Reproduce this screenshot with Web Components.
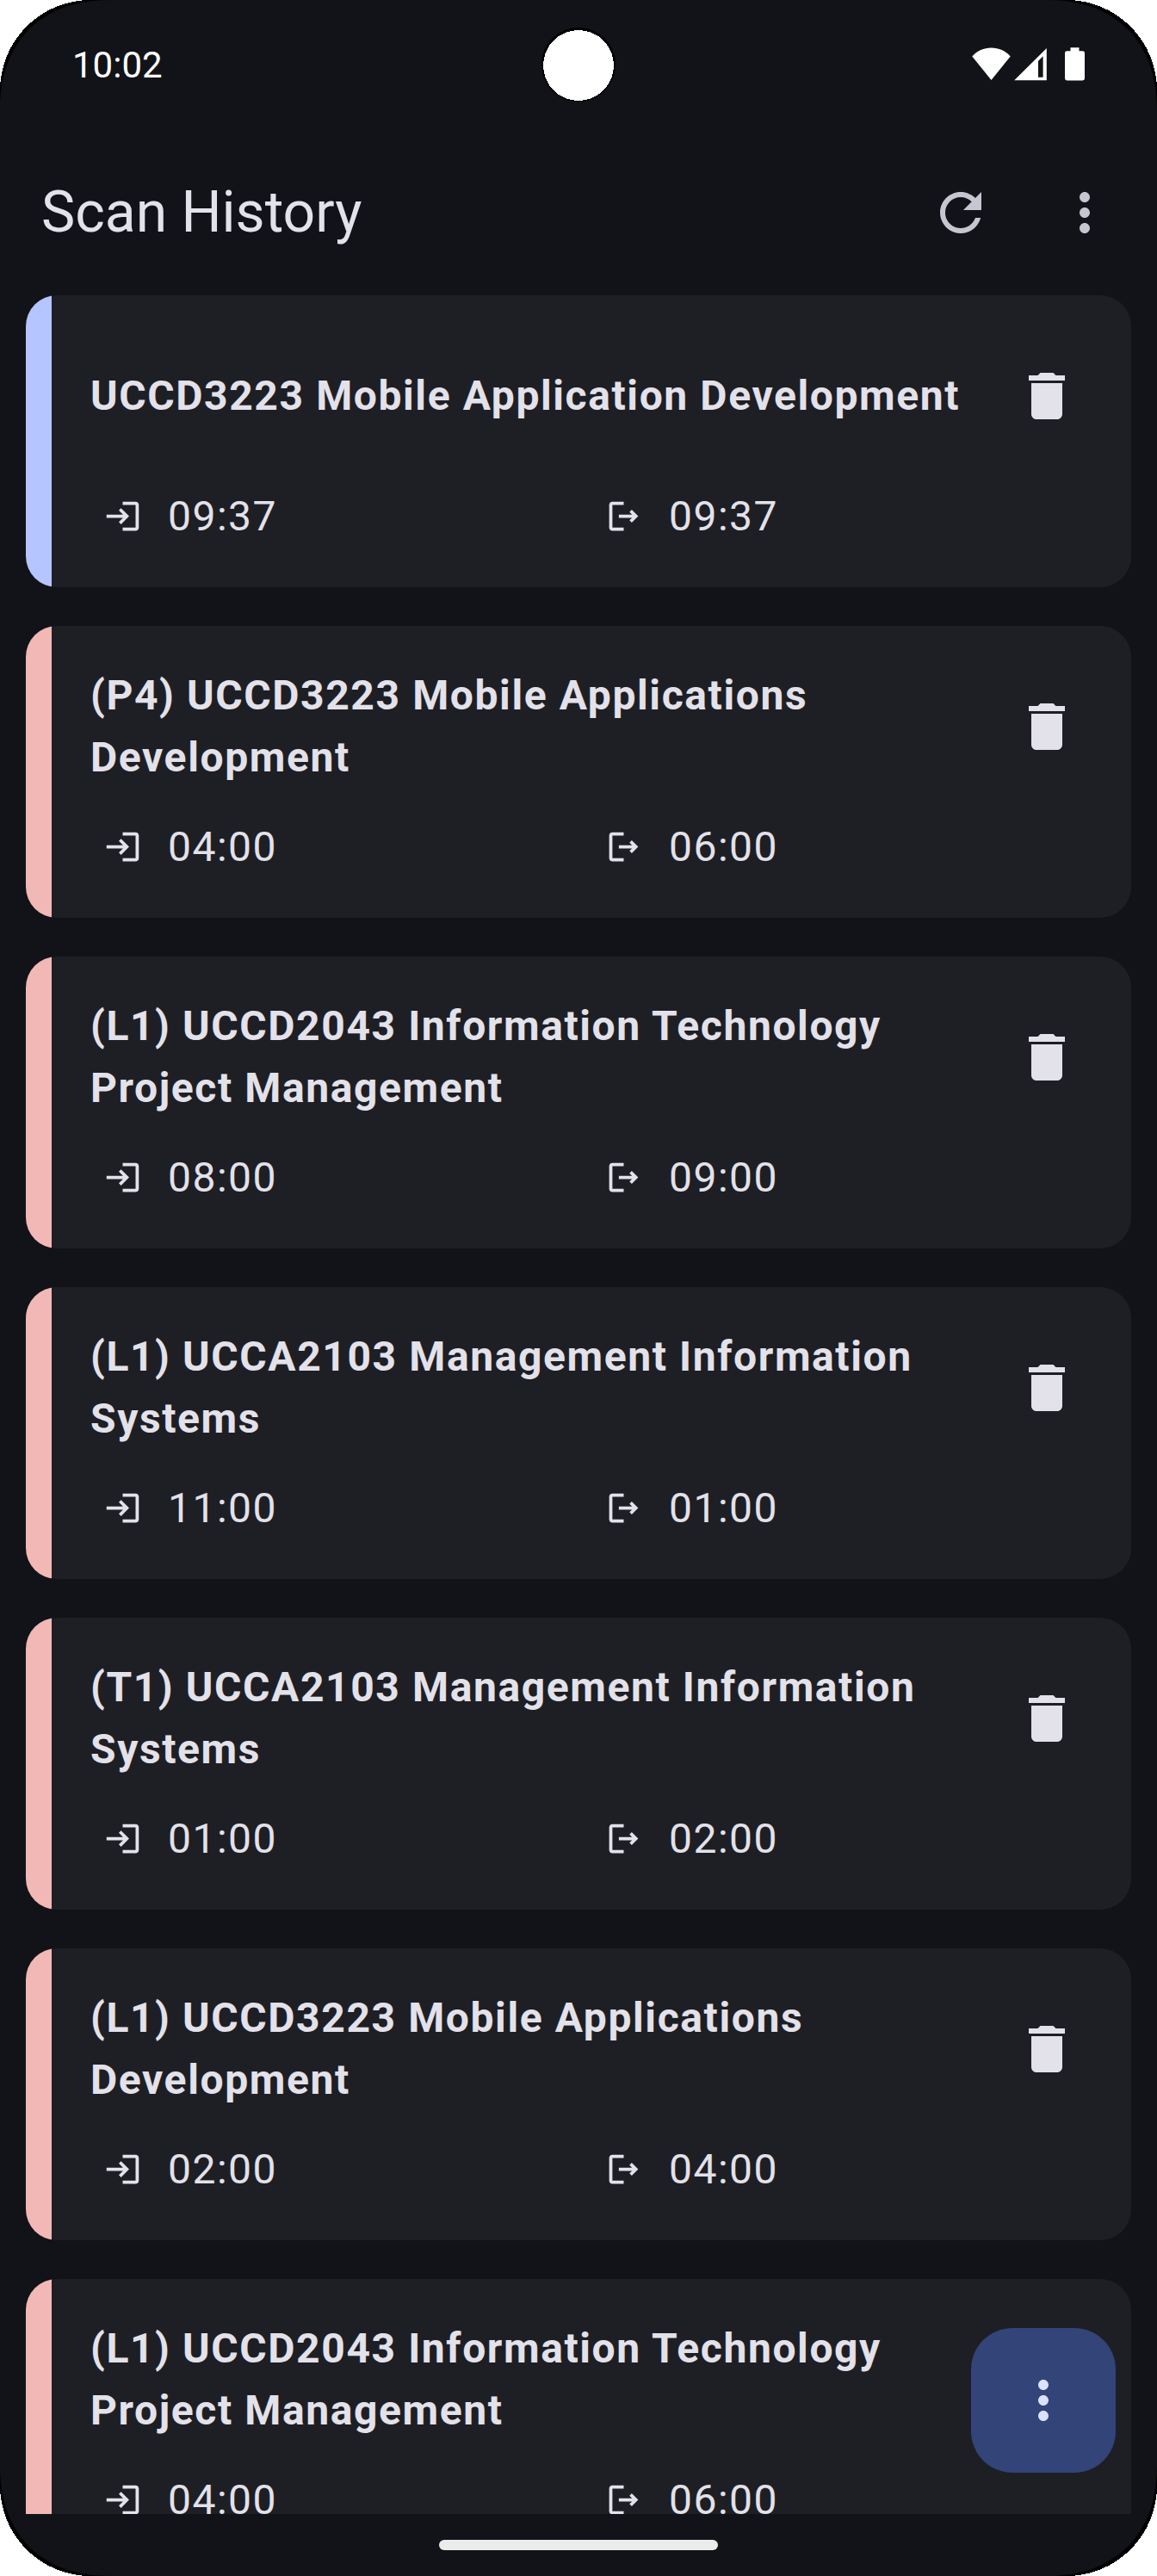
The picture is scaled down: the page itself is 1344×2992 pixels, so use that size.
<!DOCTYPE html>
<html lang="en">
<head>
<meta charset="utf-8">
<title>Scan History</title>
<style>
  html, body { margin: 0; background: #fff; }
  body { width: 1344px; height: 2992px; overflow: hidden; font-family: Roboto, sans-serif; }
</style>
</head>
<body>
<phone-screen>
  <status-bar slot="status">10:02</status-bar>
  <app-bar slot="bar">Scan History</app-bar>
  <scan-card tone="primary" in="09:37" out="09:37">UCCD3223 Mobile Application Development</scan-card>
  <scan-card in="04:00" out="06:00">(P4) UCCD3223 Mobile Applications Development</scan-card>
  <scan-card in="08:00" out="09:00">(L1) UCCD2043 Information Technology Project Management</scan-card>
  <scan-card in="11:00" out="01:00">(L1) UCCA2103 Management Information Systems</scan-card>
  <scan-card in="01:00" out="02:00">(T1) UCCA2103 Management Information Systems</scan-card>
  <scan-card in="02:00" out="04:00">(L1) UCCD3223 Mobile Applications Development</scan-card>
  <scan-card in="04:00" out="06:00">(L1) UCCD2043 Information Technology Project Management</scan-card>
  <fab-button slot="fab"></fab-button>
</phone-screen>
<script>
const ICONS = {
  refresh: 'M17.65 6.35C16.2 4.9 14.21 4 12 4c-4.42 0-7.99 3.58-7.99 8s3.57 8 7.99 8c3.73 0 6.84-2.55 7.73-6h-2.08c-.82 2.33-3.04 4-5.65 4-3.31 0-6-2.69-6-6s2.69-6 6-6c1.66 0 3.14.69 4.22 1.78L13 11h7V4l-2.35 2.35z',
  more: 'M12 8c1.1 0 2-.9 2-2s-.9-2-2-2-2 .9-2 2 .9 2 2 2zm0 2c-1.1 0-2 .9-2 2s.9 2 2 2 2-.9 2-2-.9-2-2-2zm0 6c-1.1 0-2 .9-2 2s.9 2 2 2 2-.9 2-2-.9-2-2-2z',
  trash: 'M6 19c0 1.1.9 2 2 2h8c1.1 0 2-.9 2-2V7H6v12zM19 4h-3.5l-1-1h-5l-1 1H5v2h14V4z',
  login: 'M11 7L9.6 8.4l2.6 2.6H2v2h10.2l-2.6 2.6L11 17l5-5-5-5zm9 12h-8v2h8c1.1 0 2-.9 2-2V5c0-1.1-.9-2-2-2h-8v2h8v14z',
  logout: 'M17 8l-1.41 1.41L17.17 11H9v2h8.17l-1.58 1.58L17 16l4-4-4-4zM5 5h7V3H5c-1.1 0-2 .9-2 2v14c0 1.1.9 2 2 2h7v-2H5V5z'
};

class Base extends HTMLElement {
  constructor() {
    super();
    this.attachShadow({ mode: 'open' });
  }
  connectedCallback() { this.shadowRoot.innerHTML = this.render(); }
}

customElements.define('md-icon', class extends Base {
  render() {
    return `<style>
      :host { display: block; flex: none; width: var(--icon-size, 72px); height: var(--icon-size, 72px); }
      svg { display: block; width: 100%; height: 100%; fill: currentColor; }
    </style><svg viewBox="0 0 24 24"><path d="${ICONS[this.getAttribute('name')]}"/></svg>`;
  }
});

customElements.define('status-bar', class extends Base {
  render() {
    return `<style>
      :host { display: flex; height: 151px; box-sizing: border-box; padding: 0 84px; color: #fff; justify-content: space-between; align-items: flex-start; }
      .time { font-size: 42px; line-height: 50px; margin-top: 51px; }
      .signals { display: block; margin-top: 54px; }
    </style>
    <span class="time"><slot></slot></span>
    <svg class="signals" width="131" height="40" viewBox="0 0 131 40" fill="#fff">
      <path d="M0.3 11.6C5.7 5 14 1.6 22.5 1.6S39.3 5 44.7 11.6L22.5 39z"/>
      <path fill-rule="evenodd" d="M49.200 39.300L86.800 1.900V39.300zM77 16.900V35.700H82.600V11.300z"/>
      <path d="M114.500 1.200h10v4H128.600q2.400 0 2.400 2.400V37.100q0 2.400-2.400 2.400H110.400q-2.400 0-2.400-2.400V7.600q0-2.400 2.400-2.400H114.500z"/>
    </svg>`;
  }
});

customElements.define('app-bar', class extends Base {
  render() {
    return `<style>
      :host { display: flex; height: 192px; box-sizing: border-box; padding: 0 12px 0 48px; align-items: center; color: #e3e1e9; }
      .title { flex: 1; font-size: 66px; line-height: 84px; }
      .action { width: 144px; display: flex; justify-content: center; color: #c6c5d0; }
    </style>
    <span class="title"><slot></slot></span>
    <div class="action"><md-icon name="refresh"></md-icon></div>
    <div class="action"><md-icon name="more"></md-icon></div>`;
  }
});

customElements.define('scan-time', class extends Base {
  render() {
    return `<style>
      :host { display: flex; flex: 1; align-items: center; gap: 30px; padding-left: 15px; --icon-size: 45px; font-size: 48px; line-height: 72px; letter-spacing: 1.5px; }
      md-icon { margin-bottom: 1px; }
    </style><md-icon name="${this.getAttribute('icon')}"></md-icon><span><slot></slot></span>`;
  }
});

customElements.define('scan-card', class extends Base {
  render() {
    const stripe = this.getAttribute('tone') === 'primary' ? '#b4c5ff' : '#f2b8b5';
    return `<style>
      :host { display: flex; flex: none; height: 339px; border-radius: 36px; overflow: hidden; background: #1e1f25; color: #e3e1e9; }
      .stripe { width: 30px; background: ${stripe}; }
      .body { flex: 1; padding: 45px; }
      .head { display: flex; align-items: center; height: 144px; }
      .title { flex: 1; font-size: 48px; line-height: 72px; font-weight: 700; letter-spacing: 1.6px; }
      .delete { width: 106px; display: flex; justify-content: center; }
      .times { display: flex; margin-top: 32px; }
    </style>
    <div class="stripe"></div>
    <div class="body">
      <div class="head">
        <div class="title"><slot></slot></div>
        <div class="delete"><md-icon name="trash"></md-icon></div>
      </div>
      <div class="times">
        <scan-time icon="login">${this.getAttribute('in')}</scan-time>
        <scan-time icon="logout">${this.getAttribute('out')}</scan-time>
      </div>
    </div>`;
  }
});

customElements.define('fab-button', class extends Base {
  render() {
    return `<style>
      :host { display: flex; width: 168px; height: 168px; border-radius: 48px; background: #324478; color: #dbe1ff; align-items: center; justify-content: center; }
    </style><md-icon name="more"></md-icon>`;
  }
});

customElements.define('phone-screen', class extends Base {
  render() {
    const corner = '<path d="M0 0H128C48 0 0 48 0 128z"/><path shape-rendering="crispEdges" fill="#fff" d="M0 0H105A105 105 0 0 0 0 105z"/>';
    return `<style>
      :host { display: flex; flex-direction: column; position: relative; width: 1344px; height: 2992px; background: #111318; overflow: hidden; }
      .list { height: 2577px; box-sizing: border-box; padding: 0 30px; display: flex; flex-direction: column; gap: 45px; overflow: hidden; }
      .nav { height: 72px; display: flex; align-items: center; justify-content: center; }
      .handle { width: 324px; height: 12px; border-radius: 6px; background: #ebebeb; }
      .fab { position: absolute; right: 48px; bottom: 120px; }
      .frame { position: absolute; inset: 0; pointer-events: none; }
    </style>
    <slot name="status"></slot>
    <slot name="bar"></slot>
    <div class="list"><slot></slot></div>
    <div class="nav"><div class="handle"></div></div>
    <div class="fab"><slot name="fab"></slot></div>
    <svg class="frame" width="1344" height="2992" viewBox="0 0 1344 2992">
      <g>${corner}</g>
      <g transform="translate(1344 0) scale(-1 1)">${corner}</g>
      <g transform="translate(0 2992) scale(1 -1)">${corner}</g>
      <g transform="translate(1344 2992) scale(-1 -1)">${corner}</g>
      <circle cx="672" cy="75" r="43"/>
      <circle cx="672" cy="76" r="41" fill="#fff" shape-rendering="crispEdges"/>
    </svg>`;
  }
});
</script>
</body>
</html>
